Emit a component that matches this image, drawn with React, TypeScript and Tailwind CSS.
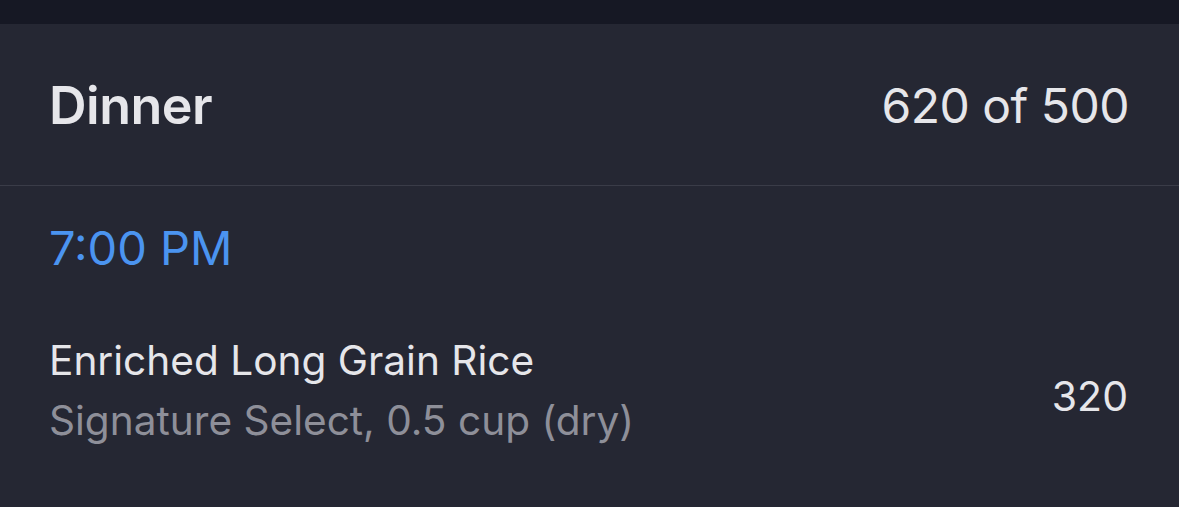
const entry = {
  meal: "Dinner",
  budget: "620 of 500",
  time: "7:00 PM",
  food: "Enriched Long Grain Rice",
  detail: "Signature Select, 0.5 cup (dry)",
  calories: "320",
};

export default function App() {
  return (
    <div
      className="flex min-h-screen w-full flex-col bg-[#252733] text-[#e4e4e8]"
      style={{ fontFamily: "Inter, 'Noto Sans', sans-serif" }}
    >
      <div className="h-[24px] w-full bg-[#161824]" />

      <header className="flex h-[161px] items-center justify-between pl-[49px] pr-[50px] pt-[3px]">
        <h1 className="text-[52px] font-semibold tracking-[-0.5px] text-[#e6e6ea]">{entry.meal}</h1>
        <p className="text-[48px] font-normal tracking-[-0.5px] text-[#e6e6ea]">{entry.budget}</p>
      </header>

      <div className="h-px w-full bg-[#3a3c48]" />

      <section className="pl-[49px] pr-[50px]">
        <p className="mt-[36px] text-[47px] leading-[52px] tracking-[0px] text-[#4b94f0]">{entry.time}</p>

        <div className="mt-[62px] flex items-center justify-between">
          <div className="flex flex-col">
            <p className="text-[40.6px] leading-[50px] tracking-[0px] text-[#e6e6ea]">{entry.food}</p>
            <p className="mt-[10px] text-[40.6px] leading-[50px] tracking-[0px] text-[#8e8f99]">{entry.detail}</p>
          </div>
          <p className="mt-[12px] pr-[1px] text-[41px] tracking-[0px] text-[#e6e6ea]">{entry.calories}</p>
        </div>
      </section>
    </div>
  );
}
